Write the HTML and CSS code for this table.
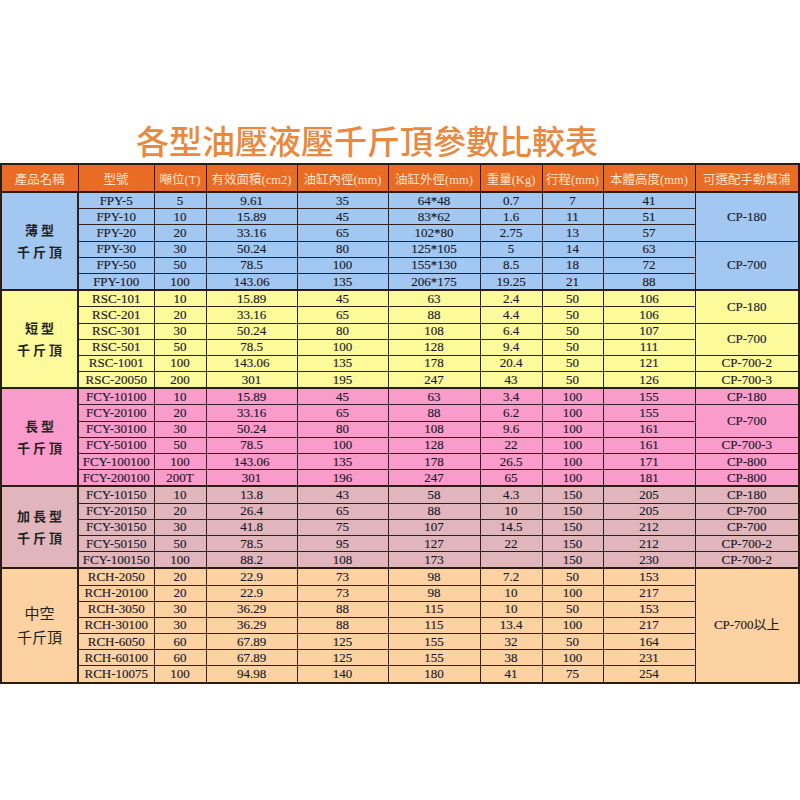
FILE: index.html
```html
<!DOCTYPE html>
<html lang="zh-Hant">
<head>
<meta charset="utf-8">
<title>各型油壓液壓千斤頂參數比較表</title>
<link rel="stylesheet" href="styles.css">
</head>
<body>
<div class="page">
  <h1 class="title">各型油壓液壓千斤頂參數比較表</h1>
  <table class="spec">
    <colgroup>
      <col class="c1"><col class="c2"><col class="c3"><col class="c4"><col class="c5">
      <col class="c6"><col class="c7"><col class="c8"><col class="c9"><col class="c10">
    </colgroup>
    <thead>
      <tr>
        <th>產品名稱</th><th>型號</th><th>噸位(T)</th><th>有效面積(cm2)</th><th>油缸內徑(mm)</th>
        <th>油缸外徑(mm)</th><th>重量(Kg)</th><th>行程(mm)</th><th>本體高度(mm)</th><th>可選配手動幫浦</th>
      </tr>
    </thead>
    <tbody class="g-blue">
      <tr><td class="name" rowspan="6">薄型<br>千斤頂</td><td>FPY-5</td><td>5</td><td>9.61</td><td>35</td><td>64*48</td><td>0.7</td><td>7</td><td>41</td><td rowspan="3">CP-180</td></tr>
      <tr><td>FPY-10</td><td>10</td><td>15.89</td><td>45</td><td>83*62</td><td>1.6</td><td>11</td><td>51</td></tr>
      <tr><td>FPY-20</td><td>20</td><td>33.16</td><td>65</td><td>102*80</td><td>2.75</td><td>13</td><td>57</td></tr>
      <tr><td>FPY-30</td><td>30</td><td>50.24</td><td>80</td><td>125*105</td><td>5</td><td>14</td><td>63</td><td rowspan="3">CP-700</td></tr>
      <tr><td>FPY-50</td><td>50</td><td>78.5</td><td>100</td><td>155*130</td><td>8.5</td><td>18</td><td>72</td></tr>
      <tr><td>FPY-100</td><td>100</td><td>143.06</td><td>135</td><td>206*175</td><td>19.25</td><td>21</td><td>88</td></tr>
    </tbody>
    <tbody class="g-yellow">
      <tr><td class="name" rowspan="6">短型<br>千斤頂</td><td>RSC-101</td><td>10</td><td>15.89</td><td>45</td><td>63</td><td>2.4</td><td>50</td><td>106</td><td rowspan="2">CP-180</td></tr>
      <tr><td>RSC-201</td><td>20</td><td>33.16</td><td>65</td><td>88</td><td>4.4</td><td>50</td><td>106</td></tr>
      <tr><td>RSC-301</td><td>30</td><td>50.24</td><td>80</td><td>108</td><td>6.4</td><td>50</td><td>107</td><td rowspan="2">CP-700</td></tr>
      <tr><td>RSC-501</td><td>50</td><td>78.5</td><td>100</td><td>128</td><td>9.4</td><td>50</td><td>111</td></tr>
      <tr><td>RSC-1001</td><td>100</td><td>143.06</td><td>135</td><td>178</td><td>20.4</td><td>50</td><td>121</td><td>CP-700-2</td></tr>
      <tr><td>RSC-20050</td><td>200</td><td>301</td><td>195</td><td>247</td><td>43</td><td>50</td><td>126</td><td>CP-700-3</td></tr>
    </tbody>
    <tbody class="g-pink">
      <tr><td class="name" rowspan="6">長型<br>千斤頂</td><td>FCY-10100</td><td>10</td><td>15.89</td><td>45</td><td>63</td><td>3.4</td><td>100</td><td>155</td><td>CP-180</td></tr>
      <tr><td>FCY-20100</td><td>20</td><td>33.16</td><td>65</td><td>88</td><td>6.2</td><td>100</td><td>155</td><td rowspan="2">CP-700</td></tr>
      <tr><td>FCY-30100</td><td>30</td><td>50.24</td><td>80</td><td>108</td><td>9.6</td><td>100</td><td>161</td></tr>
      <tr><td>FCY-50100</td><td>50</td><td>78.5</td><td>100</td><td>128</td><td>22</td><td>100</td><td>161</td><td>CP-700-3</td></tr>
      <tr><td>FCY-100100</td><td>100</td><td>143.06</td><td>135</td><td>178</td><td>26.5</td><td>100</td><td>171</td><td>CP-800</td></tr>
      <tr><td>FCY-200100</td><td>200T</td><td>301</td><td>196</td><td>247</td><td>65</td><td>100</td><td>181</td><td>CP-800</td></tr>
    </tbody>
    <tbody class="g-mauve">
      <tr><td class="name" rowspan="5">加長型<br>千斤頂</td><td>FCY-10150</td><td>10</td><td>13.8</td><td>43</td><td>58</td><td>4.3</td><td>150</td><td>205</td><td>CP-180</td></tr>
      <tr><td>FCY-20150</td><td>20</td><td>26.4</td><td>65</td><td>88</td><td>10</td><td>150</td><td>205</td><td>CP-700</td></tr>
      <tr><td>FCY-30150</td><td>30</td><td>41.8</td><td>75</td><td>107</td><td>14.5</td><td>150</td><td>212</td><td>CP-700</td></tr>
      <tr><td>FCY-50150</td><td>50</td><td>78.5</td><td>95</td><td>127</td><td>22</td><td>150</td><td>212</td><td>CP-700-2</td></tr>
      <tr><td>FCY-100150</td><td>100</td><td>88.2</td><td>108</td><td>173</td><td></td><td>150</td><td>230</td><td>CP-700-2</td></tr>
    </tbody>
    <tbody class="g-peach">
      <tr><td class="name plain" rowspan="7">中空<br>千斤頂</td><td>RCH-2050</td><td>20</td><td>22.9</td><td>73</td><td>98</td><td>7.2</td><td>50</td><td>153</td><td rowspan="7">CP-700以上</td></tr>
      <tr><td>RCH-20100</td><td>20</td><td>22.9</td><td>73</td><td>98</td><td>10</td><td>100</td><td>217</td></tr>
      <tr><td>RCH-3050</td><td>30</td><td>36.29</td><td>88</td><td>115</td><td>10</td><td>50</td><td>153</td></tr>
      <tr><td>RCH-30100</td><td>30</td><td>36.29</td><td>88</td><td>115</td><td>13.4</td><td>100</td><td>217</td></tr>
      <tr><td>RCH-6050</td><td>60</td><td>67.89</td><td>125</td><td>155</td><td>32</td><td>50</td><td>164</td></tr>
      <tr><td>RCH-60100</td><td>60</td><td>67.89</td><td>125</td><td>155</td><td>38</td><td>100</td><td>231</td></tr>
      <tr><td>RCH-10075</td><td>100</td><td>94.98</td><td>140</td><td>180</td><td>41</td><td>75</td><td>254</td></tr>
    </tbody>
  </table>
</div>
</body>
</html>
```
FILE: styles.css
```css
html, body {
  margin: 0;
  padding: 0;
  background: #ffffff;
}

.page {
  width: 800px;
  display: flex;
  flex-direction: column;
}

.title {
  margin: 0 0 3px 0;
  padding: 120px 66px 0 0;
  height: 40px;
  line-height: 40px;
  text-align: center;
  font-family: "Noto Sans CJK TC", "Noto Sans CJK SC", sans-serif;
  font-size: 33px;
  font-weight: 500;
  color: #e8893f;
}

.spec {
  width: 798px;
  table-layout: fixed;
  border-collapse: collapse;
  border: 2px solid #2a1c12;
  font-family: "Liberation Serif", "Noto Sans CJK TC", serif;
  font-size: 13px;
  color: #1a1828;
  -webkit-text-stroke: 0.15px #1a1828;
}

.c1 { width: 77px; }
.c2 { width: 76px; }
.c3 { width: 52px; }
.c4 { width: 91px; }
.c5 { width: 91px; }
.c6 { width: 92px; }
.c7 { width: 62px; }
.c8 { width: 61px; }
.c9 { width: 92px; }
.c10 { width: 104px; }

.spec th {
  height: 26px;
  padding: 0;
  background: #ea6b24;
  color: #fde3cc;
  -webkit-text-stroke: 0;
  font-weight: normal;
  font-size: 12.5px;
  white-space: nowrap;
  border: 1px solid #2a1c12;
  border-bottom-width: 2px;
  text-align: center;
}

.spec td {
  height: 15.2px;
  padding: 0;
  line-height: 14px;
  text-align: center;
  white-space: nowrap;
  border: 1px solid #2e2220;
}

.spec tbody {
  border-top: 2px solid #2a1c12;
}

.spec td.name {
  font-family: "Noto Sans CJK TC", sans-serif;
  font-size: 13px;
  font-weight: 700;
  line-height: 22px;
  letter-spacing: 3px;
  padding-left: 3px;
  color: #222;
  -webkit-text-stroke: 0;
  border-right-width: 2px;
}

.spec td.name.plain {
  font-size: 15px;
  font-weight: 400;
  letter-spacing: 0;
  padding-left: 0;
  line-height: 24px;
}

.g-blue td { background: #a2c8f1; }
.g-yellow td { background: #fdfa9c; }
.g-pink td { background: #f99bcb; }
.g-mauve td { background: #e0b6bc; }
.g-peach td { background: #fdd2a2; }
```
